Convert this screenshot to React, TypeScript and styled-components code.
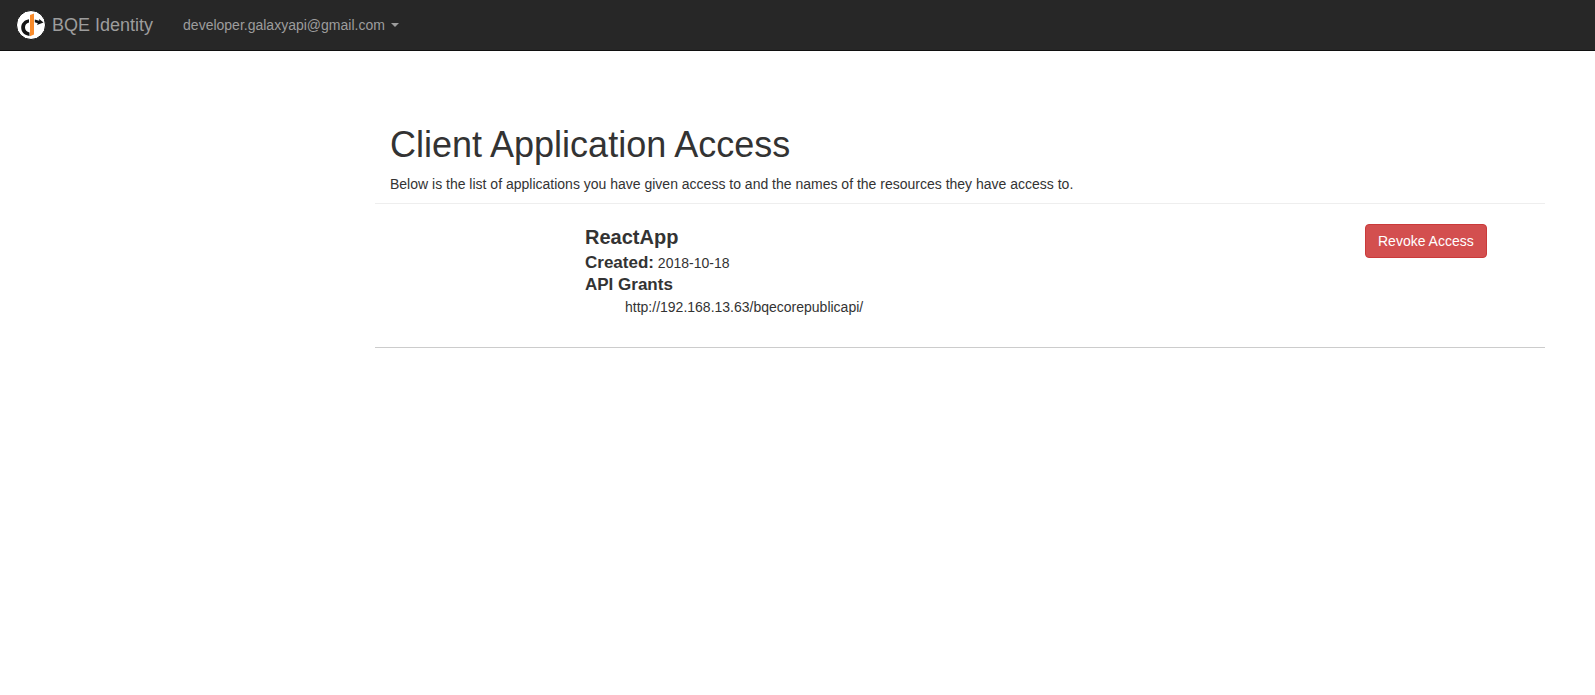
import React from "react";
import styled, { createGlobalStyle } from "styled-components";

const GlobalStyle = createGlobalStyle`
  *, *::before, *::after { box-sizing: border-box; }
  body {
    margin: 0;
    background: #fff;
    color: #333;
    font-family: "Helvetica Neue", "Liberation Sans", Arial, sans-serif;
    font-size: 14px;
    line-height: 20px;
  }
`;

const Navbar = styled.nav`
  display: flex;
  align-items: center;
  height: 51px;
  padding-left: 16px;
  background: #272727;
  border-bottom: 1px solid #101010;
`;

const Brand = styled.a`
  display: flex;
  align-items: center;
  gap: 6px;
  padding-right: 15px;
  color: #9d9d9d;
  font-size: 18px;
  line-height: 23px;
  text-decoration: none;
`;

const Logo = styled.svg`
  display: block;
  width: 30px;
  height: 30px;
`;

const AccountToggle = styled.button`
  display: flex;
  align-items: center;
  gap: 6px;
  padding: 15px;
  border: 0;
  background: transparent;
  color: #9d9d9d;
  font: inherit;
  cursor: pointer;
`;

const Caret = styled.span`
  border-top: 4px solid;
  border-right: 4px solid transparent;
  border-left: 4px solid transparent;
`;

const Container = styled.main`
  max-width: 1170px;
  margin: 74px 50px 0 auto;
`;

const PageHeader = styled.header`
  padding: 0 15px 9px;
`;

const Title = styled.h1`
  margin: 0 0 9px;
  font-size: 36px;
  font-weight: 500;
  line-height: 40px;
`;

const Lead = styled.p`
  margin: 0;
`;

const GrantRow = styled.section`
  display: grid;
  grid-template-columns: 2fr 8fr 2fr;
  padding: 20px 0;
  border-top: 1px solid #eee;
  border-bottom: 1px solid #ccc;
`;

const Column = styled.div<{ $start: number }>`
  grid-column: ${(p) => p.$start};
  padding: 0 15px;
`;

const AppName = styled.h2`
  margin: 0 0 2px;
  font-size: 20px;
  line-height: 26px;
`;

const Detail = styled.div`
  line-height: 22px;
`;

const Label = styled.strong`
  font-size: 17px;
`;

const GrantList = styled.ul`
  margin: 1px 0 10px;
  padding-left: 40px;
  list-style: none;
`;

const DangerButton = styled.button`
  padding: 6px 12px;
  border: 1px solid #ca3a3a;
  border-radius: 4px;
  background: #d34f4f;
  color: #fff;
  font: inherit;
  white-space: nowrap;
  cursor: pointer;
`;

const grants = ["http://192.168.13.63/bqecorepublicapi/"];

export default function App() {
  return (
    <>
      <GlobalStyle />
      <Navbar>
        <Brand href="#">
          <Logo viewBox="0 0 30 30" aria-hidden="true">
            <circle cx="15" cy="15" r="14.5" fill="#fff" stroke="#111" />
            <path d="M13 9.300C8.200 10 5.200 13.500 5.200 17.600c0 4.600 3.300 8 8.300 8.400v-3.600c-2.700-.4-4.500-2.300-4.500-4.900 0-2.300 1.400-4.200 4-4.900z" fill="#151515" />
            <path d="M18.800 9.500l4.400 1.300V9l4.300 3.500-6.500 2.400.8-1.700-3-.9z" fill="#151515" />
            <path d="M14 5l4-1.600v21l-4 1.800z" fill="#f98b2b" />
          </Logo>
          BQE Identity
        </Brand>
        <AccountToggle type="button" aria-haspopup="menu">
          developer.galaxyapi@gmail.com
          <Caret />
        </AccountToggle>
      </Navbar>
      <Container>
        <PageHeader>
          <Title>Client Application Access</Title>
          <Lead>
            Below is the list of applications you have given access to and the names of the resources they have access to.
          </Lead>
        </PageHeader>
        <GrantRow>
          <Column $start={2}>
            <AppName>ReactApp</AppName>
            <Detail>
              <Label>Created:</Label> 2018-10-18
            </Detail>
            <Detail>
              <Label>API Grants</Label>
            </Detail>
            <GrantList>
              {grants.map((url) => (
                <li key={url}>{url}</li>
              ))}
            </GrantList>
          </Column>
          <Column $start={3}>
            <DangerButton type="button">Revoke Access</DangerButton>
          </Column>
        </GrantRow>
      </Container>
    </>
  );
}
